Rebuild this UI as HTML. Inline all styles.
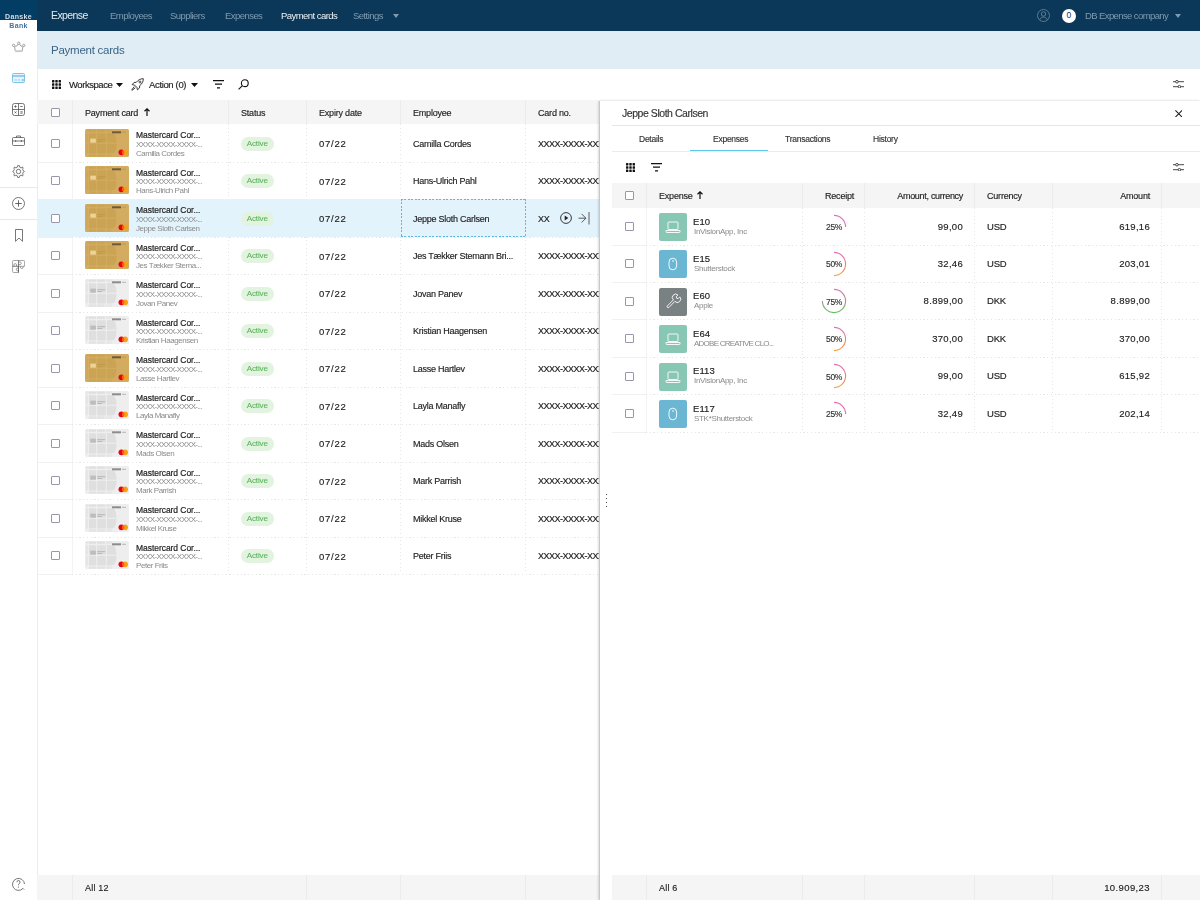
<!DOCTYPE html>
<html><head><meta charset="utf-8">
<style>
*{box-sizing:border-box;margin:0;padding:0}
html,body{width:1200px;height:900px;overflow:hidden;background:#fff;font-family:"Liberation Sans",sans-serif;color:#222}
div,span{position:absolute;white-space:nowrap}
svg{position:absolute;display:block}
.cb{width:9px;height:9px;border:1.2px solid #9796ab;border-radius:1px;background:#fff}
#nav{left:0;top:0;width:1200px;height:31px;background:#0b3858}
.navi{top:9px;font-size:9.5px;line-height:13px;color:#7f9bb0;letter-spacing:-.55px}
#side{left:0;top:31px;width:38px;height:869px;background:#fff;border-right:1px solid #ececec}
#phdr{left:37px;top:31px;width:1163px;height:38px;background:#e1edf5}
.t,.sub,.navi,.badge{will-change:transform}
.t{font-size:9px;line-height:12px;letter-spacing:-.2px;color:#222;-webkit-text-stroke:.15px currentColor}
.hdr{background:#f5f5f5}
.vd{width:1px;background:repeating-linear-gradient(180deg,#e6e6e6 0 1.2px,transparent 1.2px 3.75px)}
.hd{height:1px;background:repeating-linear-gradient(90deg,#e6e6e6 0 1.2px,transparent 1.2px 3.75px)}
.sub{color:#8a8a8a;font-size:8px;line-height:10px;letter-spacing:-.3px}
.ttl{font-size:8.5px;color:#1e1e1e;letter-spacing:-.05px;-webkit-text-stroke:.2px #1e1e1e}
.badge{width:32.5px;height:13.5px;border-radius:7px;background:#e2f3df;color:#57b257;font-size:8.1px;-webkit-text-stroke:.05px currentColor;line-height:14.2px;text-align:center;letter-spacing:-.15px}
</style></head><body>

<div id="nav">
<div style="left:0;top:0;width:37px;height:31px;background:#fff"></div>
<div style="left:0;top:0;width:37px;height:20px;background:#033d63"></div>
<div style="left:0;top:12.6px;width:37px;text-align:center;color:#d5dfe7;font-size:7px;font-weight:bold;line-height:8px;letter-spacing:.35px;will-change:transform">Danske</div>
<div style="left:0;top:21.7px;width:37px;text-align:center;color:#46719a;font-size:7px;font-weight:bold;line-height:8px;letter-spacing:.3px;will-change:transform">Bank</div>
<div class="navi" style="left:51px;top:8.5px;color:#e4ebf0;font-size:10.5px;letter-spacing:-.6px">Expense</div>
<div class="navi" style="left:110px;color:#7f9bb0">Employees</div>
<div class="navi" style="left:170px;color:#7f9bb0">Suppliers</div>
<div class="navi" style="left:224.5px;color:#7f9bb0">Expenses</div>
<div class="navi" style="left:280.5px;color:#eef2f5">Payment cards</div>
<div class="navi" style="left:353px;color:#7f9bb0">Settings</div>
<svg style="left:392.5px;top:13.5px" width="6" height="4" viewBox="0 0 6 4"><path d="M0 0H6L3 4Z" fill="#7f9bb0"/></svg>
<svg style="left:1037px;top:9px" width="13" height="13" viewBox="0 0 13 13"><circle cx="6.5" cy="6.5" r="6" fill="none" stroke="#6f8ca2" stroke-width=".8"/><circle cx="6.5" cy="5" r="2.2" fill="none" stroke="#6f8ca2" stroke-width=".8"/><path d="M2.6 10.9C3.4 8.9 4.8 8.2 6.5 8.2S9.6 8.9 10.4 10.9" fill="none" stroke="#6f8ca2" stroke-width=".8"/></svg>
<div style="left:1062px;top:9px;width:13.5px;height:13.5px;border-radius:7px;background:#fff;color:#0b3858;font-size:8.5px;line-height:13.5px;text-align:center">0</div>
<div class="navi" style="left:1084.5px;color:#7f9bb0;letter-spacing:-.6px">DB Expense company</div>
<svg style="left:1175px;top:14px" width="6" height="4" viewBox="0 0 6 4"><path d="M0 0H6L3 4Z" fill="#7f9bb0"/></svg>
</div>
<div id="side"></div>
<div style="left:0;top:187px;width:37px;height:1px;background:#e8e8e8"></div>
<div style="left:0;top:219px;width:37px;height:1px;background:#e8e8e8"></div>
<svg style="left:12px;top:41px" width="14" height="12" viewBox="0 0 14 12"><path d="M3.3 10.2 L2.6 5.6 M10.9 5.6 L10.2 10.2 M3.2 5.4 Q5 5.8 6.3 2.9 M7.4 2.9 Q8.7 5.8 10.5 5.4" fill="none" stroke="#8a8a8a" stroke-width=".8"/><rect x="3.3" y="9.2" width="7" height="1.9" fill="#c9c9c9"/><circle cx="1.6" cy="4.4" r="1.2" fill="#fff" stroke="#8a8a8a" stroke-width=".75"/><circle cx="6.8" cy="2.2" r="1.2" fill="#fff" stroke="#8a8a8a" stroke-width=".75"/><circle cx="11.8" cy="4.4" r="1.2" fill="#fff" stroke="#8a8a8a" stroke-width=".75"/></svg>
<svg style="left:12px;top:73px" width="13" height="10" viewBox="0 0 13 10"><rect x=".5" y=".5" width="12" height="9" rx="1" fill="#e6f3fb" stroke="#73bde6" stroke-width=".9"/><path d="M.5 3H12.5" stroke="#73bde6" stroke-width="1.4"/><path d="M2.5 7H5M6 7H8M10 6.5H11.5V7.8H10Z" stroke="#73bde6" stroke-width=".7" fill="none"/></svg>
<svg style="left:12px;top:103px" width="13" height="13" viewBox="0 0 13 13"><rect x=".5" y=".5" width="12" height="12" rx="2" fill="none" stroke="#555" stroke-width=".8"/><path d="M6.5 .5V12.5M.5 6.5H12.5M2.3 3.5H4.7M3.5 2.3V4.7M8.3 3.5H10.7M2.6 8.5L4.4 10.3M4.4 8.5L2.6 10.3M8.3 8.8H10.7M8.3 10.2H10.7" stroke="#555" stroke-width=".8" fill="none"/></svg>
<svg style="left:12px;top:135px" width="13" height="11" viewBox="0 0 13 11"><rect x=".5" y="2.5" width="12" height="8" rx="1" fill="none" stroke="#555" stroke-width=".8"/><path d="M4.5 2.5V1H8.5V2.5M.5 6H12.5" stroke="#555" stroke-width=".8" fill="none"/><rect x="3" y="5.3" width="1.2" height="1.4" fill="#555"/><rect x="8.8" y="5.3" width="1.2" height="1.4" fill="#555"/></svg>
<svg style="left:12px;top:165px" width="13" height="13" viewBox="0 0 13 13"><path d="M5.6.6H7.4L7.8 2.3 9.1 2.9 10.6 2 11 3.4 10.7 4.7 11.3 5.8 12.4 6.5 11.3 7.2 10.7 8.3 11 9.6 10.6 11 9.1 10.1 7.8 10.7 7.4 12.4H5.6L5.2 10.7 3.9 10.1 2.4 11 2 9.6 2.3 8.3 1.7 7.2.6 6.5 1.7 5.8 2.3 4.7 2 3.4 2.4 2 3.9 2.9 5.2 2.3Z" fill="none" stroke="#555" stroke-width=".8" stroke-linejoin="round"/><circle cx="6.5" cy="6.5" r="2.2" fill="none" stroke="#555" stroke-width=".8"/></svg>
<svg style="left:12px;top:197px" width="13" height="13" viewBox="0 0 13 13"><circle cx="6.5" cy="6.5" r="6" fill="none" stroke="#555" stroke-width=".8"/><path d="M6.5 3.3V9.7M3.3 6.5H9.7" stroke="#555" stroke-width=".9"/></svg>
<svg style="left:15px;top:229px" width="8" height="13" viewBox="0 0 8 13"><path d="M.5 .5H7.5V12.3L4 9 .5 12.3Z" fill="none" stroke="#555" stroke-width=".8" stroke-linejoin="round"/></svg>
<svg style="left:12px;top:260px" width="13" height="13" viewBox="0 0 13 13"><path d="M.6 1.4Q.6 .5 1.5 .5H11.8Q12.6 .5 12.6 1.4V6.3H6.5V12.5H1.4Q.6 12.5 .6 11.6Z" fill="none" stroke="#888" stroke-width=".75"/><path d="M6.5 .5V12.5M.6 6.3H6.5" stroke="#555" stroke-width=".75"/><path d="M2 6.3V4.3Q3.3 2.9 4.6 4.3V6.3 M6.5 2 H8.5 Q10 3.4 8.5 4.5 H6.5 M8.5 6.3 V7.8 Q9.8 9.3 11.1 7.8 V6.3 M6.5 8 H5 Q3.6 9.4 5 10.8 H6.5" fill="none" stroke="#777" stroke-width=".75"/></svg>
<svg style="left:12px;top:877px" width="14" height="14" viewBox="0 0 14 14"><path d="M12.2 12.6L11 11.4A6 6 0 1 1 12.5 7" fill="none" stroke="#555" stroke-width=".8"/><path d="M4.9 5.2Q4.9 3.5 6.5 3.5T8.1 5.1Q8.1 6.1 7 6.6 6.5 6.9 6.5 7.8V8.3" fill="none" stroke="#555" stroke-width=".8"/><circle cx="6.5" cy="10" r=".55" fill="#555"/></svg>
<div id="phdr"><div style="left:14px;top:12px;font-size:11.5px;line-height:14px;color:#3b6588;will-change:transform;letter-spacing:-.25px">Payment cards</div></div>
<div style="left:51.8px;top:80px;width:9px;height:9px"><svg width="9" height="9" viewBox="0 0 9 9" fill="#111"><rect x="0" y="0" width="2.4" height="2.4" rx=".5"/><rect x="0" y="3.3" width="2.4" height="2.4" rx=".5"/><rect x="0" y="6.6" width="2.4" height="2.4" rx=".5"/><rect x="3.3" y="0" width="2.4" height="2.4" rx=".5"/><rect x="3.3" y="3.3" width="2.4" height="2.4" rx=".5"/><rect x="3.3" y="6.6" width="2.4" height="2.4" rx=".5"/><rect x="6.6" y="0" width="2.4" height="2.4" rx=".5"/><rect x="6.6" y="3.3" width="2.4" height="2.4" rx=".5"/><rect x="6.6" y="6.6" width="2.4" height="2.4" rx=".5"/></svg></div>
<div class="t" style="left:69px;top:78.8px;font-size:9.5px;letter-spacing:-.45px">Workspace</div>
<div style="left:115.5px;top:83px;width:7px;height:4px"><svg width="7" height="4" viewBox="0 0 7 4"><path d="M0 0H7L3.5 4Z" fill="#111"/></svg></div>
<div style="left:130.5px;top:77.5px;width:13px;height:13px"><svg width="13" height="13" viewBox="0 0 13 13"><path d="M12.3.7C9.5.6 7.2 1.9 5.3 4.3L3 4.5 1.2 6.6 3.6 7.1 5.9 9.4 6.4 11.8 8.5 10 8.7 7.7C11.1 5.8 12.4 3.5 12.3.7Z" fill="none" stroke="#222" stroke-width=".9" stroke-linejoin="round"/><circle cx="9" cy="4" r="1" fill="none" stroke="#222" stroke-width=".8"/><path d="M3.3 8.6L1 11.5 .8 12.2 1.5 12 4.4 9.7" fill="none" stroke="#222" stroke-width=".9"/></svg></div>
<div class="t" style="left:149px;top:78.8px;font-size:9.5px;letter-spacing:-.35px">Action (0)</div>
<div style="left:191px;top:83px;width:7px;height:4px"><svg width="7" height="4" viewBox="0 0 7 4"><path d="M0 0H7L3.5 4Z" fill="#111"/></svg></div>
<div style="left:213px;top:80px;width:11px;height:9px"><svg width="11" height="9" viewBox="0 0 11 9"><path d="M0 .6H11M2 4.2H9M4 7.8H7" stroke="#111" stroke-width="1.2"/></svg></div>
<div style="left:238px;top:79px;width:11px;height:11px"><svg width="11" height="11" viewBox="0 0 11 11"><circle cx="6.8" cy="4.2" r="3.4" fill="none" stroke="#111" stroke-width="1.1"/><path d="M4.4 6.6L.6 10.4" stroke="#111" stroke-width="1.1"/></svg></div>
<div style="left:1172.5px;top:80px;width:11px;height:8px"><svg width="11" height="8" viewBox="0 0 11 8"><path d="M0 1.7H11M0 6.7H11" stroke="#333" stroke-width=".9"/><circle cx="3.9" cy="1.7" r="1.3" fill="#fff" stroke="#333" stroke-width=".9"/><circle cx="6.4" cy="6.7" r="1.3" fill="#fff" stroke="#333" stroke-width=".9"/></svg></div>
<div class="hdr" style="left:37px;top:100px;width:562px;height:24px"></div>
<div style="left:72px;top:100px;width:1px;height:24px;background:#ebebeb"></div>
<div style="left:72px;top:124px;width:1px;height:450px;background:#f3f3f3"></div>
<div style="left:228px;top:100px;width:1px;height:24px;background:#ebebeb"></div>
<div class="vd" style="left:228px;top:124px;height:450px"></div>
<div style="left:306px;top:100px;width:1px;height:24px;background:#ebebeb"></div>
<div class="vd" style="left:306px;top:124px;height:450px"></div>
<div style="left:400px;top:100px;width:1px;height:24px;background:#ebebeb"></div>
<div class="vd" style="left:400px;top:124px;height:450px"></div>
<div style="left:525px;top:100px;width:1px;height:24px;background:#ebebeb"></div>
<div class="vd" style="left:525px;top:124px;height:450px"></div>
<div class="cb" style="left:50.5px;top:107.5px"></div>
<div class="t" style="left:84.5px;top:106.7px">Payment card</div>
<div style="left:143.5px;top:107.5px;width:6px;height:8px"><svg width="6" height="8" viewBox="0 0 6 8"><path d="M3 8V1M.5 3.2L3 .8 5.5 3.2" stroke="#111" stroke-width="1.2" fill="none"/></svg></div>
<div class="t" style="left:240.5px;top:106.7px">Status</div>
<div class="t" style="left:318.5px;top:106.7px">Expiry date</div>
<div class="t" style="left:412.5px;top:106.7px">Employee</div>
<div class="t" style="left:537.5px;top:106.7px">Card no.</div>
<div style="left:37px;top:161.60px;width:35px;height:1px;background:#f0f0f0"></div>
<div class="hd" style="left:72px;top:161.60px;width:527px"></div>
<div class="cb" style="left:50.5px;top:138.95px"></div>
<div style="left:85px;top:128.70px;width:44px;height:28px"><svg class="card" width="44" height="28" viewBox="0 0 44 28"><rect x="0" y="0" width="44" height="28" rx="1.5" fill="#d3ac60"/><rect x="0.8" y="0.4" width="2.6" height="2.4" rx=".8" fill="#cba355" opacity=".6"/><rect x="4" y="0.4" width="7" height="2.4" rx=".8" fill="#cba355"/><rect x="12" y="0.4" width="8" height="2.4" rx=".8" fill="#cba355"/><rect x="21" y="0.4" width="6" height="2.4" rx=".8" fill="#cba355" opacity=".7"/><rect x="0.8" y="4.2" width="2.2" height="9.6" rx=".8" fill="#cba355" opacity=".6"/><rect x="4" y="4.2" width="7.2" height="9.6" rx="1" fill="#cba355"/><rect x="12.2" y="4.2" width="8.6" height="9.6" rx="1" fill="#cba355"/><path d="M21.8 4.2 Q27 3.6 29.5 5 Q31.6 9 31.6 13.8 H21.8Z" fill="#cba355"/><rect x="0.8" y="14.8" width="2.2" height="9.6" rx=".8" fill="#cba355" opacity=".6"/><rect x="4" y="14.8" width="7.2" height="9.6" rx="1" fill="#cba355"/><rect x="12.2" y="14.8" width="8.6" height="9.6" rx="1" fill="#cba355"/><path d="M21.8 14.8 H31.6 Q31.4 20 29.5 23.6 Q27 25 21.8 24.4Z" fill="#cba355"/><rect x="4" y="25.6" width="7" height="2.2" rx=".8" fill="#cba355" opacity=".8"/><rect x="12" y="25.6" width="8" height="2.2" rx=".8" fill="#cba355" opacity=".8"/><rect x="21" y="25.6" width="6" height="2.2" rx=".8" fill="#cba355" opacity=".6"/>
<rect x="5.3" y="9.6" width="5.6" height="4.1" fill="#eed396"/>
<rect x="12.2" y="10.2" width="8" height="1" fill="#bf9a4c"/><rect x="12.2" y="12" width="5" height=".9" fill="#bf9a4c"/>
<rect x="27" y="2.3" width="9" height="2" fill="#6e5a38"/><rect x="37" y="2.8" width="4" height="1" fill="#bf9a4c"/>
<circle cx="36.4" cy="23.3" r="2.9" fill="#eb001b"/><circle cx="40.1" cy="23.3" r="2.9" fill="#f79e1b"/><path d="M38.25 21.05 A2.9 2.9 0 0 1 38.25 25.55 A2.9 2.9 0 0 1 38.25 21.05Z" fill="#ff5f00"/>
</svg></div>
<div class="t ttl" style="left:135.5px;top:129.00px">Mastercard Cor...</div>
<div class="sub" style="left:135.5px;top:139.60px;letter-spacing:-.72px">XXXX-XXXX-XXXX-...</div>
<div class="sub" style="left:135.5px;top:148.60px;letter-spacing:-.45px">Camilla Cordes</div>
<div class="badge" style="left:241px;top:136.60px">Active</div>
<div class="t" style="left:319px;top:138.00px;font-size:9.5px;letter-spacing:.75px">07/22</div>
<div class="t" style="left:413px;top:137.80px;font-size:9px;letter-spacing:-.25px">Camilla Cordes</div>
<div class="t" style="left:538px;top:137.80px;font-size:9px;letter-spacing:-.5px">XXXX-XXXX-XXXX-XXXX</div>
<div style="left:37px;top:199.10px;width:35px;height:1px;background:#f0f0f0"></div>
<div class="hd" style="left:72px;top:199.10px;width:527px"></div>
<div class="cb" style="left:50.5px;top:176.45px"></div>
<div style="left:85px;top:166.20px;width:44px;height:28px"><svg class="card" width="44" height="28" viewBox="0 0 44 28"><rect x="0" y="0" width="44" height="28" rx="1.5" fill="#d3ac60"/><rect x="0.8" y="0.4" width="2.6" height="2.4" rx=".8" fill="#cba355" opacity=".6"/><rect x="4" y="0.4" width="7" height="2.4" rx=".8" fill="#cba355"/><rect x="12" y="0.4" width="8" height="2.4" rx=".8" fill="#cba355"/><rect x="21" y="0.4" width="6" height="2.4" rx=".8" fill="#cba355" opacity=".7"/><rect x="0.8" y="4.2" width="2.2" height="9.6" rx=".8" fill="#cba355" opacity=".6"/><rect x="4" y="4.2" width="7.2" height="9.6" rx="1" fill="#cba355"/><rect x="12.2" y="4.2" width="8.6" height="9.6" rx="1" fill="#cba355"/><path d="M21.8 4.2 Q27 3.6 29.5 5 Q31.6 9 31.6 13.8 H21.8Z" fill="#cba355"/><rect x="0.8" y="14.8" width="2.2" height="9.6" rx=".8" fill="#cba355" opacity=".6"/><rect x="4" y="14.8" width="7.2" height="9.6" rx="1" fill="#cba355"/><rect x="12.2" y="14.8" width="8.6" height="9.6" rx="1" fill="#cba355"/><path d="M21.8 14.8 H31.6 Q31.4 20 29.5 23.6 Q27 25 21.8 24.4Z" fill="#cba355"/><rect x="4" y="25.6" width="7" height="2.2" rx=".8" fill="#cba355" opacity=".8"/><rect x="12" y="25.6" width="8" height="2.2" rx=".8" fill="#cba355" opacity=".8"/><rect x="21" y="25.6" width="6" height="2.2" rx=".8" fill="#cba355" opacity=".6"/>
<rect x="5.3" y="9.6" width="5.6" height="4.1" fill="#eed396"/>
<rect x="12.2" y="10.2" width="8" height="1" fill="#bf9a4c"/><rect x="12.2" y="12" width="5" height=".9" fill="#bf9a4c"/>
<rect x="27" y="2.3" width="9" height="2" fill="#6e5a38"/><rect x="37" y="2.8" width="4" height="1" fill="#bf9a4c"/>
<circle cx="36.4" cy="23.3" r="2.9" fill="#eb001b"/><circle cx="40.1" cy="23.3" r="2.9" fill="#f79e1b"/><path d="M38.25 21.05 A2.9 2.9 0 0 1 38.25 25.55 A2.9 2.9 0 0 1 38.25 21.05Z" fill="#ff5f00"/>
</svg></div>
<div class="t ttl" style="left:135.5px;top:166.50px">Mastercard Cor...</div>
<div class="sub" style="left:135.5px;top:177.10px;letter-spacing:-.72px">XXXX-XXXX-XXXX-...</div>
<div class="sub" style="left:135.5px;top:186.10px;letter-spacing:-.45px">Hans-Ulrich Pahl</div>
<div class="badge" style="left:241px;top:174.10px">Active</div>
<div class="t" style="left:319px;top:175.50px;font-size:9.5px;letter-spacing:.75px">07/22</div>
<div class="t" style="left:413px;top:175.30px;font-size:9px;letter-spacing:-.25px">Hans-Ulrich Pahl</div>
<div class="t" style="left:538px;top:175.30px;font-size:9px;letter-spacing:-.5px">XXXX-XXXX-XXXX-XXXX</div>
<div style="left:37px;top:199.20px;width:562px;height:37.5px;background:#e3f3fc"></div>
<div style="left:37px;top:236.60px;width:35px;height:1px;background:#f0f0f0"></div>
<div class="hd" style="left:72px;top:236.60px;width:527px"></div>
<div class="cb" style="left:50.5px;top:213.95px"></div>
<div style="left:85px;top:203.70px;width:44px;height:28px"><svg class="card" width="44" height="28" viewBox="0 0 44 28"><rect x="0" y="0" width="44" height="28" rx="1.5" fill="#d3ac60"/><rect x="0.8" y="0.4" width="2.6" height="2.4" rx=".8" fill="#cba355" opacity=".6"/><rect x="4" y="0.4" width="7" height="2.4" rx=".8" fill="#cba355"/><rect x="12" y="0.4" width="8" height="2.4" rx=".8" fill="#cba355"/><rect x="21" y="0.4" width="6" height="2.4" rx=".8" fill="#cba355" opacity=".7"/><rect x="0.8" y="4.2" width="2.2" height="9.6" rx=".8" fill="#cba355" opacity=".6"/><rect x="4" y="4.2" width="7.2" height="9.6" rx="1" fill="#cba355"/><rect x="12.2" y="4.2" width="8.6" height="9.6" rx="1" fill="#cba355"/><path d="M21.8 4.2 Q27 3.6 29.5 5 Q31.6 9 31.6 13.8 H21.8Z" fill="#cba355"/><rect x="0.8" y="14.8" width="2.2" height="9.6" rx=".8" fill="#cba355" opacity=".6"/><rect x="4" y="14.8" width="7.2" height="9.6" rx="1" fill="#cba355"/><rect x="12.2" y="14.8" width="8.6" height="9.6" rx="1" fill="#cba355"/><path d="M21.8 14.8 H31.6 Q31.4 20 29.5 23.6 Q27 25 21.8 24.4Z" fill="#cba355"/><rect x="4" y="25.6" width="7" height="2.2" rx=".8" fill="#cba355" opacity=".8"/><rect x="12" y="25.6" width="8" height="2.2" rx=".8" fill="#cba355" opacity=".8"/><rect x="21" y="25.6" width="6" height="2.2" rx=".8" fill="#cba355" opacity=".6"/>
<rect x="5.3" y="9.6" width="5.6" height="4.1" fill="#eed396"/>
<rect x="12.2" y="10.2" width="8" height="1" fill="#bf9a4c"/><rect x="12.2" y="12" width="5" height=".9" fill="#bf9a4c"/>
<rect x="27" y="2.3" width="9" height="2" fill="#6e5a38"/><rect x="37" y="2.8" width="4" height="1" fill="#bf9a4c"/>
<circle cx="36.4" cy="23.3" r="2.9" fill="#eb001b"/><circle cx="40.1" cy="23.3" r="2.9" fill="#f79e1b"/><path d="M38.25 21.05 A2.9 2.9 0 0 1 38.25 25.55 A2.9 2.9 0 0 1 38.25 21.05Z" fill="#ff5f00"/>
</svg></div>
<div class="t ttl" style="left:135.5px;top:204.00px">Mastercard Cor...</div>
<div class="sub" style="left:135.5px;top:214.60px;letter-spacing:-.72px">XXXX-XXXX-XXXX-...</div>
<div class="sub" style="left:135.5px;top:223.60px;letter-spacing:-.45px">Jeppe Sloth Carlsen</div>
<div class="badge" style="left:241px;top:211.60px">Active</div>
<div class="t" style="left:319px;top:213.00px;font-size:9.5px;letter-spacing:.75px">07/22</div>
<div class="t" style="left:413px;top:212.80px;font-size:9px;letter-spacing:-.25px">Jeppe Sloth Carlsen</div>
<div style="left:400.5px;top:198.70px;width:125px;height:1px;background:repeating-linear-gradient(90deg,#5bb8e3 0 2px,transparent 2px 3.5px)"></div>
<div style="left:400.5px;top:235.60px;width:125px;height:1px;background:repeating-linear-gradient(90deg,#5bb8e3 0 2px,transparent 2px 3.5px)"></div>
<div style="left:400.5px;top:198.70px;width:1px;height:37.5px;background:repeating-linear-gradient(180deg,#5bb8e3 0 2px,transparent 2px 3.5px)"></div>
<div style="left:524.5px;top:198.70px;width:1px;height:37.5px;background:repeating-linear-gradient(180deg,#5bb8e3 0 2px,transparent 2px 3.5px)"></div>
<div class="t" style="left:538px;top:212.80px;font-size:9px;letter-spacing:-.2px">XX</div>
<svg style="left:559.5px;top:211.50px" width="12" height="12" viewBox="0 0 12 12"><circle cx="6" cy="6" r="5.4" fill="none" stroke="#222" stroke-width=".9"/><path d="M4.7 3.6V8.4L8.3 6Z" fill="#222"/></svg>
<svg style="left:577.5px;top:211.50px" width="13" height="13" viewBox="0 0 13 13"><path d="M.5 6.2H7.8M3.6 1.9L7.9 6.2 3.6 10.5M11 0V12.5" fill="none" stroke="#333" stroke-width=".8"/></svg>
<div style="left:37px;top:274.10px;width:35px;height:1px;background:#f0f0f0"></div>
<div class="hd" style="left:72px;top:274.10px;width:527px"></div>
<div class="cb" style="left:50.5px;top:251.45px"></div>
<div style="left:85px;top:241.20px;width:44px;height:28px"><svg class="card" width="44" height="28" viewBox="0 0 44 28"><rect x="0" y="0" width="44" height="28" rx="1.5" fill="#d3ac60"/><rect x="0.8" y="0.4" width="2.6" height="2.4" rx=".8" fill="#cba355" opacity=".6"/><rect x="4" y="0.4" width="7" height="2.4" rx=".8" fill="#cba355"/><rect x="12" y="0.4" width="8" height="2.4" rx=".8" fill="#cba355"/><rect x="21" y="0.4" width="6" height="2.4" rx=".8" fill="#cba355" opacity=".7"/><rect x="0.8" y="4.2" width="2.2" height="9.6" rx=".8" fill="#cba355" opacity=".6"/><rect x="4" y="4.2" width="7.2" height="9.6" rx="1" fill="#cba355"/><rect x="12.2" y="4.2" width="8.6" height="9.6" rx="1" fill="#cba355"/><path d="M21.8 4.2 Q27 3.6 29.5 5 Q31.6 9 31.6 13.8 H21.8Z" fill="#cba355"/><rect x="0.8" y="14.8" width="2.2" height="9.6" rx=".8" fill="#cba355" opacity=".6"/><rect x="4" y="14.8" width="7.2" height="9.6" rx="1" fill="#cba355"/><rect x="12.2" y="14.8" width="8.6" height="9.6" rx="1" fill="#cba355"/><path d="M21.8 14.8 H31.6 Q31.4 20 29.5 23.6 Q27 25 21.8 24.4Z" fill="#cba355"/><rect x="4" y="25.6" width="7" height="2.2" rx=".8" fill="#cba355" opacity=".8"/><rect x="12" y="25.6" width="8" height="2.2" rx=".8" fill="#cba355" opacity=".8"/><rect x="21" y="25.6" width="6" height="2.2" rx=".8" fill="#cba355" opacity=".6"/>
<rect x="5.3" y="9.6" width="5.6" height="4.1" fill="#eed396"/>
<rect x="12.2" y="10.2" width="8" height="1" fill="#bf9a4c"/><rect x="12.2" y="12" width="5" height=".9" fill="#bf9a4c"/>
<rect x="27" y="2.3" width="9" height="2" fill="#6e5a38"/><rect x="37" y="2.8" width="4" height="1" fill="#bf9a4c"/>
<circle cx="36.4" cy="23.3" r="2.9" fill="#eb001b"/><circle cx="40.1" cy="23.3" r="2.9" fill="#f79e1b"/><path d="M38.25 21.05 A2.9 2.9 0 0 1 38.25 25.55 A2.9 2.9 0 0 1 38.25 21.05Z" fill="#ff5f00"/>
</svg></div>
<div class="t ttl" style="left:135.5px;top:241.50px">Mastercard Cor...</div>
<div class="sub" style="left:135.5px;top:252.10px;letter-spacing:-.72px">XXXX-XXXX-XXXX-...</div>
<div class="sub" style="left:135.5px;top:261.10px;letter-spacing:-.45px">Jes Tækker Stema...</div>
<div class="badge" style="left:241px;top:249.10px">Active</div>
<div class="t" style="left:319px;top:250.50px;font-size:9.5px;letter-spacing:.75px">07/22</div>
<div class="t" style="left:413px;top:250.30px;font-size:9px;letter-spacing:-.25px">Jes Tækker Stemann Bri...</div>
<div class="t" style="left:538px;top:250.30px;font-size:9px;letter-spacing:-.5px">XXXX-XXXX-XXXX-XXXX</div>
<div style="left:37px;top:311.60px;width:35px;height:1px;background:#f0f0f0"></div>
<div class="hd" style="left:72px;top:311.60px;width:527px"></div>
<div class="cb" style="left:50.5px;top:288.95px"></div>
<div style="left:85px;top:278.70px;width:44px;height:28px"><svg class="card" width="44" height="28" viewBox="0 0 44 28"><rect x="0" y="0" width="44" height="28" rx="1.5" fill="#eeeeee"/><rect x="0.8" y="0.4" width="2.6" height="2.4" rx=".8" fill="#dfdfdf" opacity=".6"/><rect x="4" y="0.4" width="7" height="2.4" rx=".8" fill="#dfdfdf"/><rect x="12" y="0.4" width="8" height="2.4" rx=".8" fill="#dfdfdf"/><rect x="21" y="0.4" width="6" height="2.4" rx=".8" fill="#dfdfdf" opacity=".7"/><rect x="0.8" y="4.2" width="2.2" height="9.6" rx=".8" fill="#dfdfdf" opacity=".6"/><rect x="4" y="4.2" width="7.2" height="9.6" rx="1" fill="#dfdfdf"/><rect x="12.2" y="4.2" width="8.6" height="9.6" rx="1" fill="#dfdfdf"/><path d="M21.8 4.2 Q27 3.6 29.5 5 Q31.6 9 31.6 13.8 H21.8Z" fill="#dfdfdf"/><rect x="0.8" y="14.8" width="2.2" height="9.6" rx=".8" fill="#dfdfdf" opacity=".6"/><rect x="4" y="14.8" width="7.2" height="9.6" rx="1" fill="#dfdfdf"/><rect x="12.2" y="14.8" width="8.6" height="9.6" rx="1" fill="#dfdfdf"/><path d="M21.8 14.8 H31.6 Q31.4 20 29.5 23.6 Q27 25 21.8 24.4Z" fill="#dfdfdf"/><rect x="4" y="25.6" width="7" height="2.2" rx=".8" fill="#dfdfdf" opacity=".8"/><rect x="12" y="25.6" width="8" height="2.2" rx=".8" fill="#dfdfdf" opacity=".8"/><rect x="21" y="25.6" width="6" height="2.2" rx=".8" fill="#dfdfdf" opacity=".6"/>
<rect x="5.3" y="9.6" width="5.6" height="4.1" fill="#bdbdbd"/>
<rect x="12.2" y="10.2" width="8" height="1" fill="#b5b5b5"/><rect x="12.2" y="12" width="5" height=".9" fill="#b5b5b5"/>
<rect x="27" y="2.3" width="9" height="2" fill="#8c8c8c"/><rect x="37" y="2.8" width="4" height="1" fill="#b5b5b5"/>
<circle cx="36.4" cy="23.3" r="2.9" fill="#eb001b"/><circle cx="40.1" cy="23.3" r="2.9" fill="#f79e1b"/><path d="M38.25 21.05 A2.9 2.9 0 0 1 38.25 25.55 A2.9 2.9 0 0 1 38.25 21.05Z" fill="#ff5f00"/>
</svg></div>
<div class="t ttl" style="left:135.5px;top:279.00px">Mastercard Cor...</div>
<div class="sub" style="left:135.5px;top:289.60px;letter-spacing:-.72px">XXXX-XXXX-XXXX-...</div>
<div class="sub" style="left:135.5px;top:298.60px;letter-spacing:-.45px">Jovan Panev</div>
<div class="badge" style="left:241px;top:286.60px">Active</div>
<div class="t" style="left:319px;top:288.00px;font-size:9.5px;letter-spacing:.75px">07/22</div>
<div class="t" style="left:413px;top:287.80px;font-size:9px;letter-spacing:-.25px">Jovan Panev</div>
<div class="t" style="left:538px;top:287.80px;font-size:9px;letter-spacing:-.5px">XXXX-XXXX-XXXX-XXXX</div>
<div style="left:37px;top:349.10px;width:35px;height:1px;background:#f0f0f0"></div>
<div class="hd" style="left:72px;top:349.10px;width:527px"></div>
<div class="cb" style="left:50.5px;top:326.45px"></div>
<div style="left:85px;top:316.20px;width:44px;height:28px"><svg class="card" width="44" height="28" viewBox="0 0 44 28"><rect x="0" y="0" width="44" height="28" rx="1.5" fill="#eeeeee"/><rect x="0.8" y="0.4" width="2.6" height="2.4" rx=".8" fill="#dfdfdf" opacity=".6"/><rect x="4" y="0.4" width="7" height="2.4" rx=".8" fill="#dfdfdf"/><rect x="12" y="0.4" width="8" height="2.4" rx=".8" fill="#dfdfdf"/><rect x="21" y="0.4" width="6" height="2.4" rx=".8" fill="#dfdfdf" opacity=".7"/><rect x="0.8" y="4.2" width="2.2" height="9.6" rx=".8" fill="#dfdfdf" opacity=".6"/><rect x="4" y="4.2" width="7.2" height="9.6" rx="1" fill="#dfdfdf"/><rect x="12.2" y="4.2" width="8.6" height="9.6" rx="1" fill="#dfdfdf"/><path d="M21.8 4.2 Q27 3.6 29.5 5 Q31.6 9 31.6 13.8 H21.8Z" fill="#dfdfdf"/><rect x="0.8" y="14.8" width="2.2" height="9.6" rx=".8" fill="#dfdfdf" opacity=".6"/><rect x="4" y="14.8" width="7.2" height="9.6" rx="1" fill="#dfdfdf"/><rect x="12.2" y="14.8" width="8.6" height="9.6" rx="1" fill="#dfdfdf"/><path d="M21.8 14.8 H31.6 Q31.4 20 29.5 23.6 Q27 25 21.8 24.4Z" fill="#dfdfdf"/><rect x="4" y="25.6" width="7" height="2.2" rx=".8" fill="#dfdfdf" opacity=".8"/><rect x="12" y="25.6" width="8" height="2.2" rx=".8" fill="#dfdfdf" opacity=".8"/><rect x="21" y="25.6" width="6" height="2.2" rx=".8" fill="#dfdfdf" opacity=".6"/>
<rect x="5.3" y="9.6" width="5.6" height="4.1" fill="#bdbdbd"/>
<rect x="12.2" y="10.2" width="8" height="1" fill="#b5b5b5"/><rect x="12.2" y="12" width="5" height=".9" fill="#b5b5b5"/>
<rect x="27" y="2.3" width="9" height="2" fill="#8c8c8c"/><rect x="37" y="2.8" width="4" height="1" fill="#b5b5b5"/>
<circle cx="36.4" cy="23.3" r="2.9" fill="#eb001b"/><circle cx="40.1" cy="23.3" r="2.9" fill="#f79e1b"/><path d="M38.25 21.05 A2.9 2.9 0 0 1 38.25 25.55 A2.9 2.9 0 0 1 38.25 21.05Z" fill="#ff5f00"/>
</svg></div>
<div class="t ttl" style="left:135.5px;top:316.50px">Mastercard Cor...</div>
<div class="sub" style="left:135.5px;top:327.10px;letter-spacing:-.72px">XXXX-XXXX-XXXX-...</div>
<div class="sub" style="left:135.5px;top:336.10px;letter-spacing:-.45px">Kristian Haagensen</div>
<div class="badge" style="left:241px;top:324.10px">Active</div>
<div class="t" style="left:319px;top:325.50px;font-size:9.5px;letter-spacing:.75px">07/22</div>
<div class="t" style="left:413px;top:325.30px;font-size:9px;letter-spacing:-.25px">Kristian Haagensen</div>
<div class="t" style="left:538px;top:325.30px;font-size:9px;letter-spacing:-.5px">XXXX-XXXX-XXXX-XXXX</div>
<div style="left:37px;top:386.60px;width:35px;height:1px;background:#f0f0f0"></div>
<div class="hd" style="left:72px;top:386.60px;width:527px"></div>
<div class="cb" style="left:50.5px;top:363.95px"></div>
<div style="left:85px;top:353.70px;width:44px;height:28px"><svg class="card" width="44" height="28" viewBox="0 0 44 28"><rect x="0" y="0" width="44" height="28" rx="1.5" fill="#d3ac60"/><rect x="0.8" y="0.4" width="2.6" height="2.4" rx=".8" fill="#cba355" opacity=".6"/><rect x="4" y="0.4" width="7" height="2.4" rx=".8" fill="#cba355"/><rect x="12" y="0.4" width="8" height="2.4" rx=".8" fill="#cba355"/><rect x="21" y="0.4" width="6" height="2.4" rx=".8" fill="#cba355" opacity=".7"/><rect x="0.8" y="4.2" width="2.2" height="9.6" rx=".8" fill="#cba355" opacity=".6"/><rect x="4" y="4.2" width="7.2" height="9.6" rx="1" fill="#cba355"/><rect x="12.2" y="4.2" width="8.6" height="9.6" rx="1" fill="#cba355"/><path d="M21.8 4.2 Q27 3.6 29.5 5 Q31.6 9 31.6 13.8 H21.8Z" fill="#cba355"/><rect x="0.8" y="14.8" width="2.2" height="9.6" rx=".8" fill="#cba355" opacity=".6"/><rect x="4" y="14.8" width="7.2" height="9.6" rx="1" fill="#cba355"/><rect x="12.2" y="14.8" width="8.6" height="9.6" rx="1" fill="#cba355"/><path d="M21.8 14.8 H31.6 Q31.4 20 29.5 23.6 Q27 25 21.8 24.4Z" fill="#cba355"/><rect x="4" y="25.6" width="7" height="2.2" rx=".8" fill="#cba355" opacity=".8"/><rect x="12" y="25.6" width="8" height="2.2" rx=".8" fill="#cba355" opacity=".8"/><rect x="21" y="25.6" width="6" height="2.2" rx=".8" fill="#cba355" opacity=".6"/>
<rect x="5.3" y="9.6" width="5.6" height="4.1" fill="#eed396"/>
<rect x="12.2" y="10.2" width="8" height="1" fill="#bf9a4c"/><rect x="12.2" y="12" width="5" height=".9" fill="#bf9a4c"/>
<rect x="27" y="2.3" width="9" height="2" fill="#6e5a38"/><rect x="37" y="2.8" width="4" height="1" fill="#bf9a4c"/>
<circle cx="36.4" cy="23.3" r="2.9" fill="#eb001b"/><circle cx="40.1" cy="23.3" r="2.9" fill="#f79e1b"/><path d="M38.25 21.05 A2.9 2.9 0 0 1 38.25 25.55 A2.9 2.9 0 0 1 38.25 21.05Z" fill="#ff5f00"/>
</svg></div>
<div class="t ttl" style="left:135.5px;top:354.00px">Mastercard Cor...</div>
<div class="sub" style="left:135.5px;top:364.60px;letter-spacing:-.72px">XXXX-XXXX-XXXX-...</div>
<div class="sub" style="left:135.5px;top:373.60px;letter-spacing:-.45px">Lasse Hartlev</div>
<div class="badge" style="left:241px;top:361.60px">Active</div>
<div class="t" style="left:319px;top:363.00px;font-size:9.5px;letter-spacing:.75px">07/22</div>
<div class="t" style="left:413px;top:362.80px;font-size:9px;letter-spacing:-.25px">Lasse Hartlev</div>
<div class="t" style="left:538px;top:362.80px;font-size:9px;letter-spacing:-.5px">XXXX-XXXX-XXXX-XXXX</div>
<div style="left:37px;top:424.10px;width:35px;height:1px;background:#f0f0f0"></div>
<div class="hd" style="left:72px;top:424.10px;width:527px"></div>
<div class="cb" style="left:50.5px;top:401.45px"></div>
<div style="left:85px;top:391.20px;width:44px;height:28px"><svg class="card" width="44" height="28" viewBox="0 0 44 28"><rect x="0" y="0" width="44" height="28" rx="1.5" fill="#eeeeee"/><rect x="0.8" y="0.4" width="2.6" height="2.4" rx=".8" fill="#dfdfdf" opacity=".6"/><rect x="4" y="0.4" width="7" height="2.4" rx=".8" fill="#dfdfdf"/><rect x="12" y="0.4" width="8" height="2.4" rx=".8" fill="#dfdfdf"/><rect x="21" y="0.4" width="6" height="2.4" rx=".8" fill="#dfdfdf" opacity=".7"/><rect x="0.8" y="4.2" width="2.2" height="9.6" rx=".8" fill="#dfdfdf" opacity=".6"/><rect x="4" y="4.2" width="7.2" height="9.6" rx="1" fill="#dfdfdf"/><rect x="12.2" y="4.2" width="8.6" height="9.6" rx="1" fill="#dfdfdf"/><path d="M21.8 4.2 Q27 3.6 29.5 5 Q31.6 9 31.6 13.8 H21.8Z" fill="#dfdfdf"/><rect x="0.8" y="14.8" width="2.2" height="9.6" rx=".8" fill="#dfdfdf" opacity=".6"/><rect x="4" y="14.8" width="7.2" height="9.6" rx="1" fill="#dfdfdf"/><rect x="12.2" y="14.8" width="8.6" height="9.6" rx="1" fill="#dfdfdf"/><path d="M21.8 14.8 H31.6 Q31.4 20 29.5 23.6 Q27 25 21.8 24.4Z" fill="#dfdfdf"/><rect x="4" y="25.6" width="7" height="2.2" rx=".8" fill="#dfdfdf" opacity=".8"/><rect x="12" y="25.6" width="8" height="2.2" rx=".8" fill="#dfdfdf" opacity=".8"/><rect x="21" y="25.6" width="6" height="2.2" rx=".8" fill="#dfdfdf" opacity=".6"/>
<rect x="5.3" y="9.6" width="5.6" height="4.1" fill="#bdbdbd"/>
<rect x="12.2" y="10.2" width="8" height="1" fill="#b5b5b5"/><rect x="12.2" y="12" width="5" height=".9" fill="#b5b5b5"/>
<rect x="27" y="2.3" width="9" height="2" fill="#8c8c8c"/><rect x="37" y="2.8" width="4" height="1" fill="#b5b5b5"/>
<circle cx="36.4" cy="23.3" r="2.9" fill="#eb001b"/><circle cx="40.1" cy="23.3" r="2.9" fill="#f79e1b"/><path d="M38.25 21.05 A2.9 2.9 0 0 1 38.25 25.55 A2.9 2.9 0 0 1 38.25 21.05Z" fill="#ff5f00"/>
</svg></div>
<div class="t ttl" style="left:135.5px;top:391.50px">Mastercard Cor...</div>
<div class="sub" style="left:135.5px;top:402.10px;letter-spacing:-.72px">XXXX-XXXX-XXXX-...</div>
<div class="sub" style="left:135.5px;top:411.10px;letter-spacing:-.45px">Layla Manafly</div>
<div class="badge" style="left:241px;top:399.10px">Active</div>
<div class="t" style="left:319px;top:400.50px;font-size:9.5px;letter-spacing:.75px">07/22</div>
<div class="t" style="left:413px;top:400.30px;font-size:9px;letter-spacing:-.25px">Layla Manafly</div>
<div class="t" style="left:538px;top:400.30px;font-size:9px;letter-spacing:-.5px">XXXX-XXXX-XXXX-XXXX</div>
<div style="left:37px;top:461.60px;width:35px;height:1px;background:#f0f0f0"></div>
<div class="hd" style="left:72px;top:461.60px;width:527px"></div>
<div class="cb" style="left:50.5px;top:438.95px"></div>
<div style="left:85px;top:428.70px;width:44px;height:28px"><svg class="card" width="44" height="28" viewBox="0 0 44 28"><rect x="0" y="0" width="44" height="28" rx="1.5" fill="#eeeeee"/><rect x="0.8" y="0.4" width="2.6" height="2.4" rx=".8" fill="#dfdfdf" opacity=".6"/><rect x="4" y="0.4" width="7" height="2.4" rx=".8" fill="#dfdfdf"/><rect x="12" y="0.4" width="8" height="2.4" rx=".8" fill="#dfdfdf"/><rect x="21" y="0.4" width="6" height="2.4" rx=".8" fill="#dfdfdf" opacity=".7"/><rect x="0.8" y="4.2" width="2.2" height="9.6" rx=".8" fill="#dfdfdf" opacity=".6"/><rect x="4" y="4.2" width="7.2" height="9.6" rx="1" fill="#dfdfdf"/><rect x="12.2" y="4.2" width="8.6" height="9.6" rx="1" fill="#dfdfdf"/><path d="M21.8 4.2 Q27 3.6 29.5 5 Q31.6 9 31.6 13.8 H21.8Z" fill="#dfdfdf"/><rect x="0.8" y="14.8" width="2.2" height="9.6" rx=".8" fill="#dfdfdf" opacity=".6"/><rect x="4" y="14.8" width="7.2" height="9.6" rx="1" fill="#dfdfdf"/><rect x="12.2" y="14.8" width="8.6" height="9.6" rx="1" fill="#dfdfdf"/><path d="M21.8 14.8 H31.6 Q31.4 20 29.5 23.6 Q27 25 21.8 24.4Z" fill="#dfdfdf"/><rect x="4" y="25.6" width="7" height="2.2" rx=".8" fill="#dfdfdf" opacity=".8"/><rect x="12" y="25.6" width="8" height="2.2" rx=".8" fill="#dfdfdf" opacity=".8"/><rect x="21" y="25.6" width="6" height="2.2" rx=".8" fill="#dfdfdf" opacity=".6"/>
<rect x="5.3" y="9.6" width="5.6" height="4.1" fill="#bdbdbd"/>
<rect x="12.2" y="10.2" width="8" height="1" fill="#b5b5b5"/><rect x="12.2" y="12" width="5" height=".9" fill="#b5b5b5"/>
<rect x="27" y="2.3" width="9" height="2" fill="#8c8c8c"/><rect x="37" y="2.8" width="4" height="1" fill="#b5b5b5"/>
<circle cx="36.4" cy="23.3" r="2.9" fill="#eb001b"/><circle cx="40.1" cy="23.3" r="2.9" fill="#f79e1b"/><path d="M38.25 21.05 A2.9 2.9 0 0 1 38.25 25.55 A2.9 2.9 0 0 1 38.25 21.05Z" fill="#ff5f00"/>
</svg></div>
<div class="t ttl" style="left:135.5px;top:429.00px">Mastercard Cor...</div>
<div class="sub" style="left:135.5px;top:439.60px;letter-spacing:-.72px">XXXX-XXXX-XXXX-...</div>
<div class="sub" style="left:135.5px;top:448.60px;letter-spacing:-.45px">Mads Olsen</div>
<div class="badge" style="left:241px;top:436.60px">Active</div>
<div class="t" style="left:319px;top:438.00px;font-size:9.5px;letter-spacing:.75px">07/22</div>
<div class="t" style="left:413px;top:437.80px;font-size:9px;letter-spacing:-.25px">Mads Olsen</div>
<div class="t" style="left:538px;top:437.80px;font-size:9px;letter-spacing:-.5px">XXXX-XXXX-XXXX-XXXX</div>
<div style="left:37px;top:499.10px;width:35px;height:1px;background:#f0f0f0"></div>
<div class="hd" style="left:72px;top:499.10px;width:527px"></div>
<div class="cb" style="left:50.5px;top:476.45px"></div>
<div style="left:85px;top:466.20px;width:44px;height:28px"><svg class="card" width="44" height="28" viewBox="0 0 44 28"><rect x="0" y="0" width="44" height="28" rx="1.5" fill="#eeeeee"/><rect x="0.8" y="0.4" width="2.6" height="2.4" rx=".8" fill="#dfdfdf" opacity=".6"/><rect x="4" y="0.4" width="7" height="2.4" rx=".8" fill="#dfdfdf"/><rect x="12" y="0.4" width="8" height="2.4" rx=".8" fill="#dfdfdf"/><rect x="21" y="0.4" width="6" height="2.4" rx=".8" fill="#dfdfdf" opacity=".7"/><rect x="0.8" y="4.2" width="2.2" height="9.6" rx=".8" fill="#dfdfdf" opacity=".6"/><rect x="4" y="4.2" width="7.2" height="9.6" rx="1" fill="#dfdfdf"/><rect x="12.2" y="4.2" width="8.6" height="9.6" rx="1" fill="#dfdfdf"/><path d="M21.8 4.2 Q27 3.6 29.5 5 Q31.6 9 31.6 13.8 H21.8Z" fill="#dfdfdf"/><rect x="0.8" y="14.8" width="2.2" height="9.6" rx=".8" fill="#dfdfdf" opacity=".6"/><rect x="4" y="14.8" width="7.2" height="9.6" rx="1" fill="#dfdfdf"/><rect x="12.2" y="14.8" width="8.6" height="9.6" rx="1" fill="#dfdfdf"/><path d="M21.8 14.8 H31.6 Q31.4 20 29.5 23.6 Q27 25 21.8 24.4Z" fill="#dfdfdf"/><rect x="4" y="25.6" width="7" height="2.2" rx=".8" fill="#dfdfdf" opacity=".8"/><rect x="12" y="25.6" width="8" height="2.2" rx=".8" fill="#dfdfdf" opacity=".8"/><rect x="21" y="25.6" width="6" height="2.2" rx=".8" fill="#dfdfdf" opacity=".6"/>
<rect x="5.3" y="9.6" width="5.6" height="4.1" fill="#bdbdbd"/>
<rect x="12.2" y="10.2" width="8" height="1" fill="#b5b5b5"/><rect x="12.2" y="12" width="5" height=".9" fill="#b5b5b5"/>
<rect x="27" y="2.3" width="9" height="2" fill="#8c8c8c"/><rect x="37" y="2.8" width="4" height="1" fill="#b5b5b5"/>
<circle cx="36.4" cy="23.3" r="2.9" fill="#eb001b"/><circle cx="40.1" cy="23.3" r="2.9" fill="#f79e1b"/><path d="M38.25 21.05 A2.9 2.9 0 0 1 38.25 25.55 A2.9 2.9 0 0 1 38.25 21.05Z" fill="#ff5f00"/>
</svg></div>
<div class="t ttl" style="left:135.5px;top:466.50px">Mastercard Cor...</div>
<div class="sub" style="left:135.5px;top:477.10px;letter-spacing:-.72px">XXXX-XXXX-XXXX-...</div>
<div class="sub" style="left:135.5px;top:486.10px;letter-spacing:-.45px">Mark Parrish</div>
<div class="badge" style="left:241px;top:474.10px">Active</div>
<div class="t" style="left:319px;top:475.50px;font-size:9.5px;letter-spacing:.75px">07/22</div>
<div class="t" style="left:413px;top:475.30px;font-size:9px;letter-spacing:-.25px">Mark Parrish</div>
<div class="t" style="left:538px;top:475.30px;font-size:9px;letter-spacing:-.5px">XXXX-XXXX-XXXX-XXXX</div>
<div style="left:37px;top:536.60px;width:35px;height:1px;background:#f0f0f0"></div>
<div class="hd" style="left:72px;top:536.60px;width:527px"></div>
<div class="cb" style="left:50.5px;top:513.95px"></div>
<div style="left:85px;top:503.70px;width:44px;height:28px"><svg class="card" width="44" height="28" viewBox="0 0 44 28"><rect x="0" y="0" width="44" height="28" rx="1.5" fill="#eeeeee"/><rect x="0.8" y="0.4" width="2.6" height="2.4" rx=".8" fill="#dfdfdf" opacity=".6"/><rect x="4" y="0.4" width="7" height="2.4" rx=".8" fill="#dfdfdf"/><rect x="12" y="0.4" width="8" height="2.4" rx=".8" fill="#dfdfdf"/><rect x="21" y="0.4" width="6" height="2.4" rx=".8" fill="#dfdfdf" opacity=".7"/><rect x="0.8" y="4.2" width="2.2" height="9.6" rx=".8" fill="#dfdfdf" opacity=".6"/><rect x="4" y="4.2" width="7.2" height="9.6" rx="1" fill="#dfdfdf"/><rect x="12.2" y="4.2" width="8.6" height="9.6" rx="1" fill="#dfdfdf"/><path d="M21.8 4.2 Q27 3.6 29.5 5 Q31.6 9 31.6 13.8 H21.8Z" fill="#dfdfdf"/><rect x="0.8" y="14.8" width="2.2" height="9.6" rx=".8" fill="#dfdfdf" opacity=".6"/><rect x="4" y="14.8" width="7.2" height="9.6" rx="1" fill="#dfdfdf"/><rect x="12.2" y="14.8" width="8.6" height="9.6" rx="1" fill="#dfdfdf"/><path d="M21.8 14.8 H31.6 Q31.4 20 29.5 23.6 Q27 25 21.8 24.4Z" fill="#dfdfdf"/><rect x="4" y="25.6" width="7" height="2.2" rx=".8" fill="#dfdfdf" opacity=".8"/><rect x="12" y="25.6" width="8" height="2.2" rx=".8" fill="#dfdfdf" opacity=".8"/><rect x="21" y="25.6" width="6" height="2.2" rx=".8" fill="#dfdfdf" opacity=".6"/>
<rect x="5.3" y="9.6" width="5.6" height="4.1" fill="#bdbdbd"/>
<rect x="12.2" y="10.2" width="8" height="1" fill="#b5b5b5"/><rect x="12.2" y="12" width="5" height=".9" fill="#b5b5b5"/>
<rect x="27" y="2.3" width="9" height="2" fill="#8c8c8c"/><rect x="37" y="2.8" width="4" height="1" fill="#b5b5b5"/>
<circle cx="36.4" cy="23.3" r="2.9" fill="#eb001b"/><circle cx="40.1" cy="23.3" r="2.9" fill="#f79e1b"/><path d="M38.25 21.05 A2.9 2.9 0 0 1 38.25 25.55 A2.9 2.9 0 0 1 38.25 21.05Z" fill="#ff5f00"/>
</svg></div>
<div class="t ttl" style="left:135.5px;top:504.00px">Mastercard Cor...</div>
<div class="sub" style="left:135.5px;top:514.60px;letter-spacing:-.72px">XXXX-XXXX-XXXX-...</div>
<div class="sub" style="left:135.5px;top:523.60px;letter-spacing:-.45px">Mikkel Kruse</div>
<div class="badge" style="left:241px;top:511.60px">Active</div>
<div class="t" style="left:319px;top:513.00px;font-size:9.5px;letter-spacing:.75px">07/22</div>
<div class="t" style="left:413px;top:512.80px;font-size:9px;letter-spacing:-.25px">Mikkel Kruse</div>
<div class="t" style="left:538px;top:512.80px;font-size:9px;letter-spacing:-.5px">XXXX-XXXX-XXXX-XXXX</div>
<div style="left:37px;top:574.10px;width:35px;height:1px;background:#f0f0f0"></div>
<div class="hd" style="left:72px;top:574.10px;width:527px"></div>
<div class="cb" style="left:50.5px;top:551.45px"></div>
<div style="left:85px;top:541.20px;width:44px;height:28px"><svg class="card" width="44" height="28" viewBox="0 0 44 28"><rect x="0" y="0" width="44" height="28" rx="1.5" fill="#eeeeee"/><rect x="0.8" y="0.4" width="2.6" height="2.4" rx=".8" fill="#dfdfdf" opacity=".6"/><rect x="4" y="0.4" width="7" height="2.4" rx=".8" fill="#dfdfdf"/><rect x="12" y="0.4" width="8" height="2.4" rx=".8" fill="#dfdfdf"/><rect x="21" y="0.4" width="6" height="2.4" rx=".8" fill="#dfdfdf" opacity=".7"/><rect x="0.8" y="4.2" width="2.2" height="9.6" rx=".8" fill="#dfdfdf" opacity=".6"/><rect x="4" y="4.2" width="7.2" height="9.6" rx="1" fill="#dfdfdf"/><rect x="12.2" y="4.2" width="8.6" height="9.6" rx="1" fill="#dfdfdf"/><path d="M21.8 4.2 Q27 3.6 29.5 5 Q31.6 9 31.6 13.8 H21.8Z" fill="#dfdfdf"/><rect x="0.8" y="14.8" width="2.2" height="9.6" rx=".8" fill="#dfdfdf" opacity=".6"/><rect x="4" y="14.8" width="7.2" height="9.6" rx="1" fill="#dfdfdf"/><rect x="12.2" y="14.8" width="8.6" height="9.6" rx="1" fill="#dfdfdf"/><path d="M21.8 14.8 H31.6 Q31.4 20 29.5 23.6 Q27 25 21.8 24.4Z" fill="#dfdfdf"/><rect x="4" y="25.6" width="7" height="2.2" rx=".8" fill="#dfdfdf" opacity=".8"/><rect x="12" y="25.6" width="8" height="2.2" rx=".8" fill="#dfdfdf" opacity=".8"/><rect x="21" y="25.6" width="6" height="2.2" rx=".8" fill="#dfdfdf" opacity=".6"/>
<rect x="5.3" y="9.6" width="5.6" height="4.1" fill="#bdbdbd"/>
<rect x="12.2" y="10.2" width="8" height="1" fill="#b5b5b5"/><rect x="12.2" y="12" width="5" height=".9" fill="#b5b5b5"/>
<rect x="27" y="2.3" width="9" height="2" fill="#8c8c8c"/><rect x="37" y="2.8" width="4" height="1" fill="#b5b5b5"/>
<circle cx="36.4" cy="23.3" r="2.9" fill="#eb001b"/><circle cx="40.1" cy="23.3" r="2.9" fill="#f79e1b"/><path d="M38.25 21.05 A2.9 2.9 0 0 1 38.25 25.55 A2.9 2.9 0 0 1 38.25 21.05Z" fill="#ff5f00"/>
</svg></div>
<div class="t ttl" style="left:135.5px;top:541.50px">Mastercard Cor...</div>
<div class="sub" style="left:135.5px;top:552.10px;letter-spacing:-.72px">XXXX-XXXX-XXXX-...</div>
<div class="sub" style="left:135.5px;top:561.10px;letter-spacing:-.45px">Peter Friis</div>
<div class="badge" style="left:241px;top:549.10px">Active</div>
<div class="t" style="left:319px;top:550.50px;font-size:9.5px;letter-spacing:.75px">07/22</div>
<div class="t" style="left:413px;top:550.30px;font-size:9px;letter-spacing:-.25px">Peter Friis</div>
<div class="t" style="left:538px;top:550.30px;font-size:9px;letter-spacing:-.5px">XXXX-XXXX-XXXX-XXXX</div>
<div class="hdr" style="left:37px;top:875px;width:562px;height:25px"></div>
<div style="left:72px;top:875px;width:1px;height:25px;background:#ebebeb"></div>
<div style="left:306px;top:875px;width:1px;height:25px;background:#ebebeb"></div>
<div style="left:400px;top:875px;width:1px;height:25px;background:#ebebeb"></div>
<div style="left:525px;top:875px;width:1px;height:25px;background:#ebebeb"></div>
<div class="t" style="left:84.5px;top:882px;letter-spacing:.2px">All 12</div>
<div style="left:599px;top:101px;width:601px;height:799px;background:#fff;border-left:1.3px solid #c8c8c8;box-shadow:-1px 0 2px rgba(0,0,0,.12), 0 -1px 2px rgba(0,0,0,.06)"></div>
<div style="left:605.5px;top:494px;width:1.3px;height:14px;background:repeating-linear-gradient(#444 0 1.3px,transparent 1.3px 4px)"></div>
<div class="t" style="left:621.5px;top:107px;font-size:10.5px;line-height:13px;color:#333;letter-spacing:-.45px">Jeppe Sloth Carlsen</div>
<div style="left:1174.5px;top:109.5px;width:7.5px;height:7.5px"><svg width="7.5" height="7.5" viewBox="0 0 7.5 7.5"><path d="M.4 .4L7.1 7.1M7.1 .4L.4 7.1" stroke="#222" stroke-width="1.1"/></svg></div>
<div style="left:612px;top:125px;width:588px;height:1px;background:#e6e6e6"></div>
<div class="t" style="left:638.5px;top:132.8px;font-size:8.5px;color:#333;letter-spacing:-.25px">Details</div>
<div class="t" style="left:712.5px;top:132.8px;font-size:8.5px;color:#333;letter-spacing:-.25px">Expenses</div>
<div class="t" style="left:784.5px;top:132.8px;font-size:8.5px;color:#333;letter-spacing:-.25px">Transactions</div>
<div class="t" style="left:872.5px;top:132.8px;font-size:8.5px;color:#333;letter-spacing:-.25px">History</div>
<div style="left:690px;top:150px;width:78px;height:2px;background:#62c6ee"></div>
<div style="left:612px;top:151px;width:588px;height:1px;background:#ececec"></div>
<div style="left:626.2px;top:163px;width:9.5px;height:9.5px"><svg width="9" height="9" viewBox="0 0 9 9" fill="#111"><rect x="0" y="0" width="2.4" height="2.4" rx=".5"/><rect x="0" y="3.3" width="2.4" height="2.4" rx=".5"/><rect x="0" y="6.6" width="2.4" height="2.4" rx=".5"/><rect x="3.3" y="0" width="2.4" height="2.4" rx=".5"/><rect x="3.3" y="3.3" width="2.4" height="2.4" rx=".5"/><rect x="3.3" y="6.6" width="2.4" height="2.4" rx=".5"/><rect x="6.6" y="0" width="2.4" height="2.4" rx=".5"/><rect x="6.6" y="3.3" width="2.4" height="2.4" rx=".5"/><rect x="6.6" y="6.6" width="2.4" height="2.4" rx=".5"/></svg></div>
<div style="left:650.5px;top:163px;width:11px;height:9px"><svg width="11" height="9" viewBox="0 0 11 9"><path d="M0 .6H11M2 4.2H9M4 7.8H7" stroke="#111" stroke-width="1.2"/></svg></div>
<div style="left:1172.5px;top:163px;width:11px;height:8px"><svg width="11" height="8" viewBox="0 0 11 8"><path d="M0 1.7H11M0 6.7H11" stroke="#333" stroke-width=".9"/><circle cx="3.9" cy="1.7" r="1.3" fill="#fff" stroke="#333" stroke-width=".9"/><circle cx="6.4" cy="6.7" r="1.3" fill="#fff" stroke="#333" stroke-width=".9"/></svg></div>
<div class="hdr" style="left:612px;top:183px;width:588px;height:24.5px"></div>
<div style="left:646px;top:183px;width:1px;height:24.5px;background:#ebebeb"></div>
<div style="left:646px;top:207.5px;width:1px;height:225px;background:#f3f3f3"></div>
<div style="left:802px;top:183px;width:1px;height:24.5px;background:#ebebeb"></div>
<div class="vd" style="left:802px;top:207.5px;height:225px"></div>
<div style="left:864px;top:183px;width:1px;height:24.5px;background:#ebebeb"></div>
<div class="vd" style="left:864px;top:207.5px;height:225px"></div>
<div style="left:974px;top:183px;width:1px;height:24.5px;background:#ebebeb"></div>
<div class="vd" style="left:974px;top:207.5px;height:225px"></div>
<div style="left:1052px;top:183px;width:1px;height:24.5px;background:#ebebeb"></div>
<div class="vd" style="left:1052px;top:207.5px;height:225px"></div>
<div style="left:1161px;top:183px;width:1px;height:24.5px;background:#ebebeb"></div>
<div class="vd" style="left:1161px;top:207.5px;height:225px"></div>
<div class="cb" style="left:624.5px;top:191.0px"></div>
<div class="t" style="left:658.5px;top:190px;font-size:9px">Expense</div>
<div style="left:697px;top:191px;width:6px;height:8px"><svg width="6" height="8" viewBox="0 0 6 8"><path d="M3 8V1M.5 3.2L3 .8 5.5 3.2" stroke="#111" stroke-width="1.2" fill="none"/></svg></div>
<div class="t" style="left:824.5px;top:190px;font-size:9px">Receipt</div>
<div class="t" style="left:864.5px;top:190px;width:98px;text-align:right;font-size:9px;letter-spacing:-.3px">Amount, currency</div>
<div class="t" style="left:986.5px;top:190px;font-size:9px">Currency</div>
<div class="t" style="left:1052.5px;top:190px;width:97px;text-align:right;font-size:9px">Amount</div>
<div style="left:612px;top:244.55px;width:34px;height:1px;background:#f0f0f0"></div>
<div class="hd" style="left:646px;top:244.55px;width:554px"></div>
<div class="cb" style="left:624.5px;top:221.75px"></div>
<div style="left:659px;top:212.70px;width:28px;height:28px"><svg width="28" height="28" viewBox="0 0 28 28"><rect width="28" height="28" rx="2" fill="#87c7b4"/><rect x="9" y="9" width="10" height="7.5" rx=".8" fill="none" stroke="#fff" stroke-width=".9"/><path d="M7 17.5 H21 V18.5 Q21 19.5 20 19.5 H8 Q7 19.5 7 18.5Z" fill="none" stroke="#fff" stroke-width=".9"/></svg></div>
<div class="t" style="left:693px;top:215.50px;font-size:9.5px;color:#222;letter-spacing:.1px">E10</div>
<div class="sub" style="left:693.5px;top:226.50px;font-size:8px;letter-spacing:-.3px">InVisionApp, Inc</div>
<div style="left:820.5px;top:213.50px;width:26px;height:26px"><svg width="26" height="26" viewBox="0 0 26 26"><defs><linearGradient id="g25" gradientUnits="userSpaceOnUse" x1="0" y1="1.4000000000000004" x2="0" y2="24.6"><stop offset="0" stop-color="#e06fb8"/><stop offset="1" stop-color="#e07ab8"/></linearGradient></defs><path d="M13 1.4000000000000004 A11.6 11.6 0 0 1 24.60 13.00" stroke="url(#g25)" stroke-width="1.15" fill="none"/></svg></div>
<div class="t" style="left:822px;top:221.00px;width:24px;text-align:center;font-size:8.5px;color:#333;letter-spacing:-.35px">25%</div>
<div class="t" style="left:864.5px;top:220.50px;width:98px;text-align:right;font-size:9.5px;letter-spacing:.3px">99,00</div>
<div class="t" style="left:986.5px;top:220.50px;font-size:9.5px">USD</div>
<div class="t" style="left:1052.5px;top:220.50px;width:97px;text-align:right;font-size:9.5px;letter-spacing:.3px">619,16</div>
<div style="left:612px;top:282.00px;width:34px;height:1px;background:#f0f0f0"></div>
<div class="hd" style="left:646px;top:282.00px;width:554px"></div>
<div class="cb" style="left:624.5px;top:259.2px"></div>
<div style="left:659px;top:250.15px;width:28px;height:28px"><svg width="28" height="28" viewBox="0 0 28 28"><rect width="28" height="28" rx="2" fill="#6bb7d3"/><rect x="10" y="8.2" width="7.6" height="11.6" rx="3.8" fill="none" stroke="#fff" stroke-width=".9"/><path d="M14 10 V12" stroke="#fff" stroke-width=".9"/></svg></div>
<div class="t" style="left:693px;top:252.95px;font-size:9.5px;color:#222;letter-spacing:.1px">E15</div>
<div class="sub" style="left:693.5px;top:263.95px;font-size:8px;letter-spacing:-.3px">Shutterstock</div>
<div style="left:820.5px;top:250.95px;width:26px;height:26px"><svg width="26" height="26" viewBox="0 0 26 26"><defs><linearGradient id="g50" gradientUnits="userSpaceOnUse" x1="0" y1="1.4000000000000004" x2="0" y2="24.6"><stop offset="0" stop-color="#e06fb8"/><stop offset="1" stop-color="#f0a040"/></linearGradient></defs><path d="M13 1.4000000000000004 A11.6 11.6 0 0 1 13.00 24.60" stroke="url(#g50)" stroke-width="1.15" fill="none"/></svg></div>
<div class="t" style="left:822px;top:258.45px;width:24px;text-align:center;font-size:8.5px;color:#333;letter-spacing:-.35px">50%</div>
<div class="t" style="left:864.5px;top:257.95px;width:98px;text-align:right;font-size:9.5px;letter-spacing:.3px">32,46</div>
<div class="t" style="left:986.5px;top:257.95px;font-size:9.5px">USD</div>
<div class="t" style="left:1052.5px;top:257.95px;width:97px;text-align:right;font-size:9.5px;letter-spacing:.3px">203,01</div>
<div style="left:612px;top:319.45px;width:34px;height:1px;background:#f0f0f0"></div>
<div class="hd" style="left:646px;top:319.45px;width:554px"></div>
<div class="cb" style="left:624.5px;top:296.65px"></div>
<div style="left:659px;top:287.60px;width:28px;height:28px"><svg width="28" height="28" viewBox="0 0 28 28"><rect width="28" height="28" rx="2" fill="#7a8183"/><path transform="translate(-.6,-1.6)" d="M9 19.5 L15 13.5 A3.2 3.2 0 0 1 19.5 8.6 L17.8 10.3 L18.2 11.8 L19.7 12.2 L21.4 10.5 A3.2 3.2 0 0 1 16.5 15 L10.5 21 Q9.7 21.6 9 21 Q8.4 20.3 9 19.5Z" fill="none" stroke="#fff" stroke-width=".9" stroke-linejoin="round"/></svg></div>
<div class="t" style="left:693px;top:290.40px;font-size:9.5px;color:#222;letter-spacing:.1px">E60</div>
<div class="sub" style="left:693.5px;top:301.40px;font-size:8px;letter-spacing:-.3px">Apple</div>
<div style="left:820.5px;top:288.40px;width:26px;height:26px"><svg width="26" height="26" viewBox="0 0 26 26"><defs><linearGradient id="g75" gradientUnits="userSpaceOnUse" x1="0" y1="1.4000000000000004" x2="0" y2="24.6"><stop offset="0" stop-color="#e06fb8"/><stop offset="1" stop-color="#62c060"/></linearGradient></defs><path d="M13 1.4000000000000004 A11.6 11.6 0 1 1 1.40 13.00" stroke="url(#g75)" stroke-width="1.15" fill="none"/></svg></div>
<div class="t" style="left:822px;top:295.90px;width:24px;text-align:center;font-size:8.5px;color:#333;letter-spacing:-.35px">75%</div>
<div class="t" style="left:864.5px;top:295.40px;width:98px;text-align:right;font-size:9.5px;letter-spacing:.3px">8.899,00</div>
<div class="t" style="left:986.5px;top:295.40px;font-size:9.5px">DKK</div>
<div class="t" style="left:1052.5px;top:295.40px;width:97px;text-align:right;font-size:9.5px;letter-spacing:.3px">8.899,00</div>
<div style="left:612px;top:356.90px;width:34px;height:1px;background:#f0f0f0"></div>
<div class="hd" style="left:646px;top:356.90px;width:554px"></div>
<div class="cb" style="left:624.5px;top:334.1px"></div>
<div style="left:659px;top:325.05px;width:28px;height:28px"><svg width="28" height="28" viewBox="0 0 28 28"><rect width="28" height="28" rx="2" fill="#87c7b4"/><rect x="9" y="9" width="10" height="7.5" rx=".8" fill="none" stroke="#fff" stroke-width=".9"/><path d="M7 17.5 H21 V18.5 Q21 19.5 20 19.5 H8 Q7 19.5 7 18.5Z" fill="none" stroke="#fff" stroke-width=".9"/></svg></div>
<div class="t" style="left:693px;top:327.85px;font-size:9.5px;color:#222;letter-spacing:.1px">E64</div>
<div class="sub" style="left:693.5px;top:338.85px;font-size:8px;letter-spacing:-.75px">ADOBE CREATIVE CLO...</div>
<div style="left:820.5px;top:325.85px;width:26px;height:26px"><svg width="26" height="26" viewBox="0 0 26 26"><defs><linearGradient id="g50" gradientUnits="userSpaceOnUse" x1="0" y1="1.4000000000000004" x2="0" y2="24.6"><stop offset="0" stop-color="#e06fb8"/><stop offset="1" stop-color="#f0a040"/></linearGradient></defs><path d="M13 1.4000000000000004 A11.6 11.6 0 0 1 13.00 24.60" stroke="url(#g50)" stroke-width="1.15" fill="none"/></svg></div>
<div class="t" style="left:822px;top:333.35px;width:24px;text-align:center;font-size:8.5px;color:#333;letter-spacing:-.35px">50%</div>
<div class="t" style="left:864.5px;top:332.85px;width:98px;text-align:right;font-size:9.5px;letter-spacing:.3px">370,00</div>
<div class="t" style="left:986.5px;top:332.85px;font-size:9.5px">DKK</div>
<div class="t" style="left:1052.5px;top:332.85px;width:97px;text-align:right;font-size:9.5px;letter-spacing:.3px">370,00</div>
<div style="left:612px;top:394.35px;width:34px;height:1px;background:#f0f0f0"></div>
<div class="hd" style="left:646px;top:394.35px;width:554px"></div>
<div class="cb" style="left:624.5px;top:371.55px"></div>
<div style="left:659px;top:362.50px;width:28px;height:28px"><svg width="28" height="28" viewBox="0 0 28 28"><rect width="28" height="28" rx="2" fill="#87c7b4"/><rect x="9" y="9" width="10" height="7.5" rx=".8" fill="none" stroke="#fff" stroke-width=".9"/><path d="M7 17.5 H21 V18.5 Q21 19.5 20 19.5 H8 Q7 19.5 7 18.5Z" fill="none" stroke="#fff" stroke-width=".9"/></svg></div>
<div class="t" style="left:693px;top:365.30px;font-size:9.5px;color:#222;letter-spacing:.1px">E113</div>
<div class="sub" style="left:693.5px;top:376.30px;font-size:8px;letter-spacing:-.3px">InVisionApp, Inc</div>
<div style="left:820.5px;top:363.30px;width:26px;height:26px"><svg width="26" height="26" viewBox="0 0 26 26"><defs><linearGradient id="g50" gradientUnits="userSpaceOnUse" x1="0" y1="1.4000000000000004" x2="0" y2="24.6"><stop offset="0" stop-color="#e06fb8"/><stop offset="1" stop-color="#f0a040"/></linearGradient></defs><path d="M13 1.4000000000000004 A11.6 11.6 0 0 1 13.00 24.60" stroke="url(#g50)" stroke-width="1.15" fill="none"/></svg></div>
<div class="t" style="left:822px;top:370.80px;width:24px;text-align:center;font-size:8.5px;color:#333;letter-spacing:-.35px">50%</div>
<div class="t" style="left:864.5px;top:370.30px;width:98px;text-align:right;font-size:9.5px;letter-spacing:.3px">99,00</div>
<div class="t" style="left:986.5px;top:370.30px;font-size:9.5px">USD</div>
<div class="t" style="left:1052.5px;top:370.30px;width:97px;text-align:right;font-size:9.5px;letter-spacing:.3px">615,92</div>
<div style="left:612px;top:431.80px;width:34px;height:1px;background:#f0f0f0"></div>
<div class="hd" style="left:646px;top:431.80px;width:554px"></div>
<div class="cb" style="left:624.5px;top:409.0px"></div>
<div style="left:659px;top:399.95px;width:28px;height:28px"><svg width="28" height="28" viewBox="0 0 28 28"><rect width="28" height="28" rx="2" fill="#6bb7d3"/><rect x="10" y="8.2" width="7.6" height="11.6" rx="3.8" fill="none" stroke="#fff" stroke-width=".9"/><path d="M14 10 V12" stroke="#fff" stroke-width=".9"/></svg></div>
<div class="t" style="left:693px;top:402.75px;font-size:9.5px;color:#222;letter-spacing:.1px">E117</div>
<div class="sub" style="left:693.5px;top:413.75px;font-size:8px;letter-spacing:-.3px">STK*Shutterstock</div>
<div style="left:820.5px;top:400.75px;width:26px;height:26px"><svg width="26" height="26" viewBox="0 0 26 26"><defs><linearGradient id="g25" gradientUnits="userSpaceOnUse" x1="0" y1="1.4000000000000004" x2="0" y2="24.6"><stop offset="0" stop-color="#e06fb8"/><stop offset="1" stop-color="#e07ab8"/></linearGradient></defs><path d="M13 1.4000000000000004 A11.6 11.6 0 0 1 24.60 13.00" stroke="url(#g25)" stroke-width="1.15" fill="none"/></svg></div>
<div class="t" style="left:822px;top:408.25px;width:24px;text-align:center;font-size:8.5px;color:#333;letter-spacing:-.35px">25%</div>
<div class="t" style="left:864.5px;top:407.75px;width:98px;text-align:right;font-size:9.5px;letter-spacing:.3px">32,49</div>
<div class="t" style="left:986.5px;top:407.75px;font-size:9.5px">USD</div>
<div class="t" style="left:1052.5px;top:407.75px;width:97px;text-align:right;font-size:9.5px;letter-spacing:.3px">202,14</div>
<div class="hdr" style="left:612px;top:875px;width:588px;height:25px"></div>
<div style="left:646px;top:875px;width:1px;height:25px;background:#ebebeb"></div>
<div style="left:802px;top:875px;width:1px;height:25px;background:#ebebeb"></div>
<div style="left:864px;top:875px;width:1px;height:25px;background:#ebebeb"></div>
<div style="left:974px;top:875px;width:1px;height:25px;background:#ebebeb"></div>
<div style="left:1052px;top:875px;width:1px;height:25px;background:#ebebeb"></div>
<div style="left:1161px;top:875px;width:1px;height:25px;background:#ebebeb"></div>
<div class="t" style="left:658.5px;top:882px;letter-spacing:.2px">All 6</div>
<div class="t" style="left:1052.5px;top:882px;width:97px;text-align:right;font-size:9.5px;letter-spacing:.4px">10.909,23</div>
</body></html>
